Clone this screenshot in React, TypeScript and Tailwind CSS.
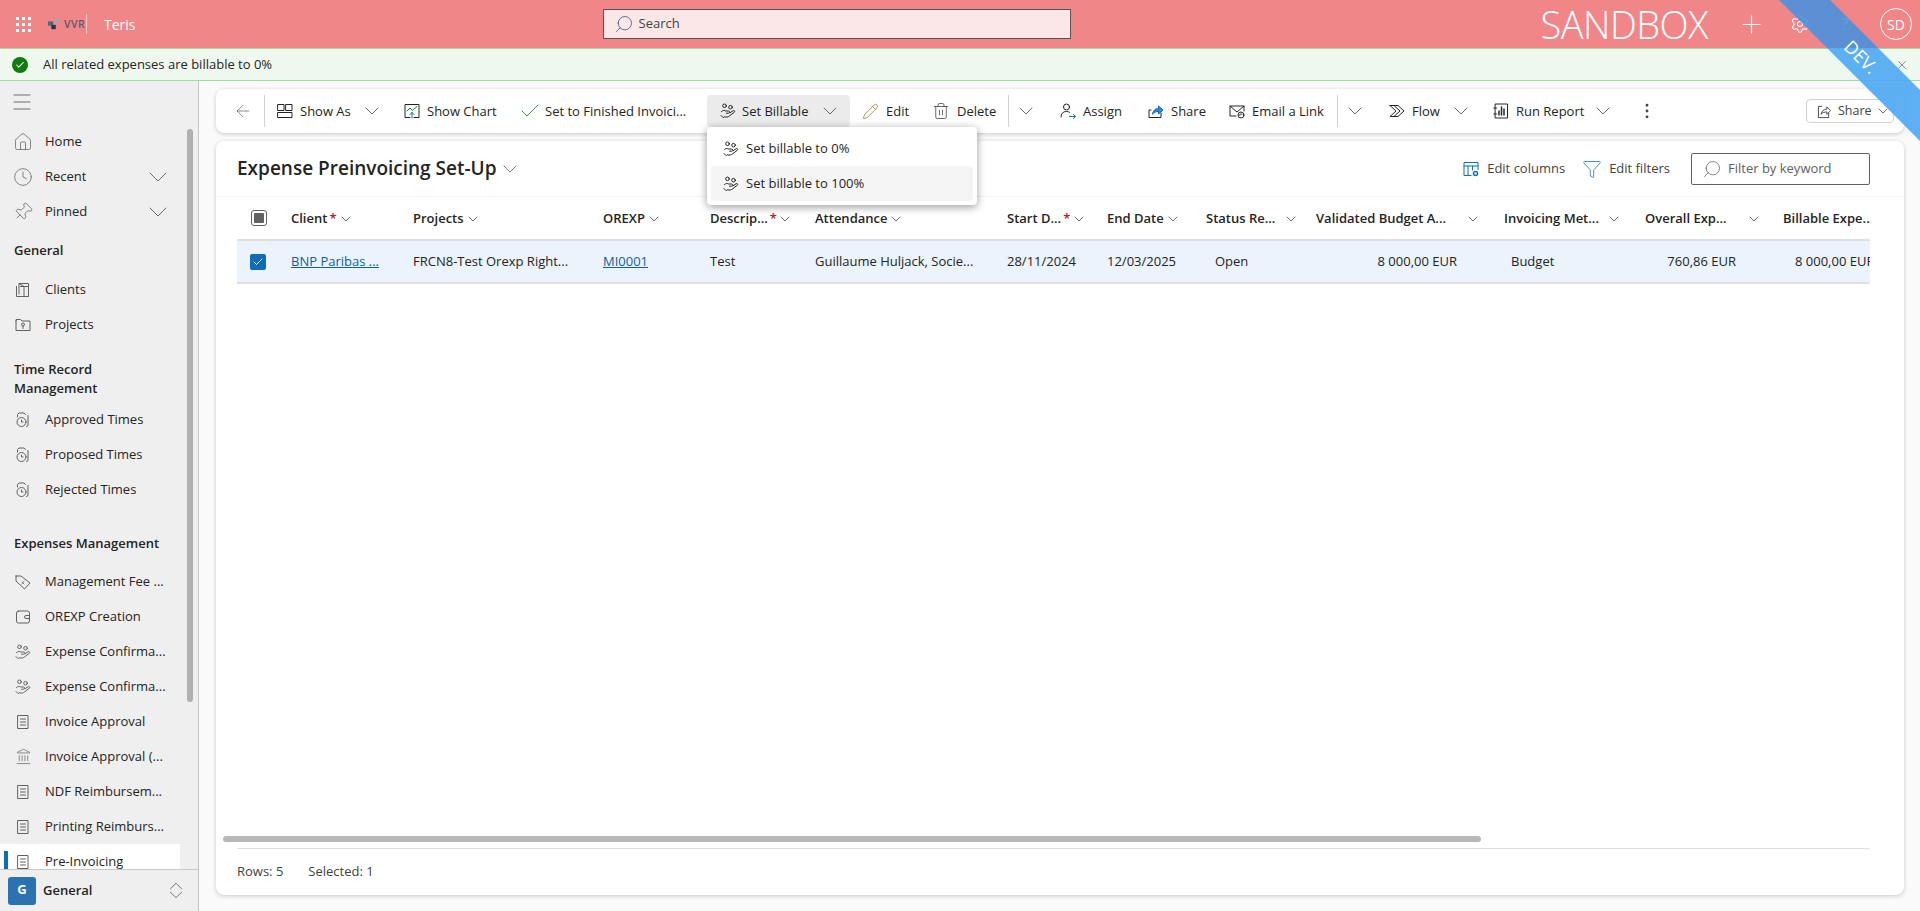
import type { ReactNode } from 'react';
import {
  ArrowLeft,
  Check,
  ChevronDown,
  ChevronUp,
  Clock,
  EllipsisVertical,
  Filter,
  Home,
  Landmark,
  Menu,
  Pencil,
  Pin,
  Plus,
  Search,
  Settings,
  Trash2,
  X,
} from 'lucide-react';

function Svg({ size = 16, children, className }: { size?: number; children: ReactNode; className?: string }) {
  return (
    <svg
      width={size}
      height={size}
      viewBox="0 0 16 16"
      fill="none"
      stroke="currentColor"
      strokeWidth={1}
      strokeLinecap="round"
      strokeLinejoin="round"
      className={`flex-none ${className ?? ''}`}
    >
      {children}
    </svg>
  );
}

const BillableIcon = ({ className }: { className?: string }) => (
  <Svg className={className}>
    <circle cx="4.5" cy="2.8" r="1.8" />
    <circle cx="10.5" cy="4.2" r="1.8" />
    <path d="M1.5 8.5c1.5-1.3 3-1.3 4.2-.5h2.8c1.5 0 1.5 2.2 0 2.2H6.5" />
    <path d="M1 12.5l2.2 2.2 1-.9c2.5.6 4 .2 5.5-1l4.6-3.6c1-1-.2-2.2-1.2-1.5l-3 2" />
  </Svg>
);

const ShowAsIcon = () => (
  <Svg>
    <rect x="1" y="1.5" width="6" height="6" />
    <rect x="9" y="1.5" width="6" height="6" />
    <rect x="1" y="9.5" width="14" height="5" />
  </Svg>
);

const ChartIcon = () => (
  <Svg>
    <path d="M6 14.5H1V1.5h14v13h-5" />
    <path d="M3 8l3-3 2.5 2.5L13 3.5" stroke="#107c10" />
    <path d="M8 15V9.5M6 11.5l2-2 2 2" stroke="#0f6cbd" />
  </Svg>
);

const AssignIcon = () => (
  <Svg>
    <circle cx="6.5" cy="4" r="3" />
    <path d="M1 14c0-3.5 2-5.5 5.5-5.5 1.2 0 2.2.3 3 .8" />
    <path d="M9.5 13.5h6M13.5 11.5l2 2-2 2" stroke="#0f6cbd" />
  </Svg>
);

const ShareIcon = () => (
  <Svg>
    <path d="M3 7H1v7.5h12V10" />
    <path d="M4.5 11c.5-3.5 3-5.5 6-5.5V3l4.5 4-4.5 4V8.5c-2.5 0-4.5.7-6 2.5z" fill="#2b88d8" stroke="#0f6cbd" />
  </Svg>
);

const EmailIcon = () => (
  <Svg>
    <path d="M7 13H1V3h14v5" />
    <path d="M1 3l7 6 7-6" />
    <circle cx="12" cy="12" r="3" />
    <path d="M10.8 12.5a1.2 1.2 0 0 1 2.2-1" />
  </Svg>
);

const FlowIcon = () => (
  <Svg>
    <path d="M1 2.5h8l6 5.5-6 5.5H1L7 8 1 2.5z" />
    <path d="M5 2.5l6 5.5-6 5.5" />
  </Svg>
);

const ReportIcon = () => (
  <Svg>
    <rect x="2.5" y="1" width="12" height="14" />
    <path d="M6 12V8M8.5 12V4M11 12V6" strokeWidth="1.5" />
    <path d="M.8 5h3M.8 11h3" />
  </Svg>
);

const ClientsIcon = () => (
  <Svg>
    <path d="M1.5 4.5v10h12v-10h-8" />
    <path d="M4 12V1.5h9.5v13" />
    <path d="M4 1.5l5 3v10" />
  </Svg>
);

const ProjectIcon = () => (
  <Svg>
    <path d="M1 4V2.5h4.5L7 4h8v9.5H1V4z" />
    <circle cx="8" cy="7.5" r="1.5" />
    <path d="M8 9v2.5" />
  </Svg>
);

const TimeIcon = () => (
  <Svg>
    <path d="M2.5 5V2.5L4 1h5l1.5 1.5M13 3.5v10l-1.5 1" />
    <circle cx="6.5" cy="10" r="4.5" />
    <path d="M6.5 8v2h1.5" />
  </Svg>
);

const TagIcon = () => (
  <Svg>
    <path d="M1 2h5l9 7-5.5 6L1 7V2z" />
    <path d="M7 8l2 2M9 7l-2 3" stroke="#888" />
  </Svg>
);

const WalletIcon = () => (
  <Svg>
    <rect x="1.5" y="2" width="13" height="12" rx="2" />
    <path d="M14.5 6.5H11a1.5 1.5 0 0 0 0 3h3.5" />
  </Svg>
);

const InvoiceIcon = () => (
  <Svg>
    <path d="M3 1.5h10v13H3z" />
    <path d="M5.5 5h5M5.5 8h5M5.5 11h5" />
  </Svg>
);

const BankIcon = () => <Landmark size={17} strokeWidth={1} className="flex-none" />;

const EditColumnsIcon = () => (
  <Svg className="text-[#0f6cbd]">
    <path d="M8 14.5H1v-13h14v7" />
    <path d="M1 5h14M5 5v9.5M9.5 5v4" />
    <circle cx="12.5" cy="12.5" r="2" strokeWidth="1.5" />
  </Svg>
);

const Chevron = ({ className }: { className?: string }) => (
  <ChevronDown size={24} strokeWidth={0.8} className={`flex-none text-[#424242] ${className ?? ''}`} />
);

const SmallChevron = ({ className }: { className?: string }) => (
  <ChevronDown size={16} strokeWidth={1.4} className={`flex-none text-[#616161] ${className ?? ''}`} />
);

function NavRow({ icon, label }: { icon: ReactNode; label: string }) {
  return (
    <div className="flex h-[35px] flex-none items-center pl-[15px] text-[#242424]">
      <span className="w-[30px] flex-none text-[#616161]">{icon}</span>
      <span className="truncate">{label}</span>
    </div>
  );
}

function Sidebar() {
  return (
    <aside className="relative flex w-[199px] flex-none flex-col border-r border-[#c4c4c4] bg-[#efefef]">
      <div className="flex-1 overflow-hidden pr-[18px]">
        <div className="flex h-[42px] items-center pl-[10px] text-[#424242]">
          <Menu size={24} strokeWidth={0.75} />
        </div>
        <div className="h-px" />
        <NavRow icon={<Home size={20} strokeWidth={0.9} className="-ml-[2px]" />} label="Home" />
        <div className="relative">
          <NavRow icon={<Clock size={20} strokeWidth={0.9} className="-ml-[2px]" />} label="Recent" />
          <ChevronDown size={32} strokeWidth={0.7} className="absolute left-[142px] top-[2px] text-[#616161]" />
        </div>
        <div className="relative">
          <NavRow icon={<Pin size={20} strokeWidth={0.9} className="-ml-[2px] rotate-45" />} label="Pinned" />
          <ChevronDown size={32} strokeWidth={0.7} className="absolute left-[142px] top-[2px] text-[#616161]" />
        </div>
        <div className="pl-[14px] pt-[11px] pb-[12px] font-semibold leading-[20px] text-[#242424]">General</div>
        <NavRow icon={<ClientsIcon />} label="Clients" />
        <NavRow icon={<ProjectIcon />} label="Projects" />
        <div className="pl-[14px] pt-[18px] pb-[4px] font-semibold leading-[19px] text-[#242424]">
          Time Record
          <br />
          Management
        </div>
        <NavRow icon={<TimeIcon />} label="Approved Times" />
        <NavRow icon={<TimeIcon />} label="Proposed Times" />
        <NavRow icon={<TimeIcon />} label="Rejected Times" />
        <div className="pl-[14px] pt-[26px] pb-[11px] font-semibold leading-[20px] whitespace-nowrap text-[#242424]">
          Expenses Management
        </div>
        <NavRow icon={<TagIcon />} label="Management Fee ..." />
        <NavRow icon={<WalletIcon />} label="OREXP Creation" />
        <NavRow icon={<BillableIcon />} label="Expense Confirma..." />
        <NavRow icon={<BillableIcon />} label="Expense Confirma..." />
        <NavRow icon={<InvoiceIcon />} label="Invoice Approval" />
        <NavRow icon={<BankIcon />} label="Invoice Approval (..." />
        <NavRow icon={<InvoiceIcon />} label="NDF Reimbursem..." />
        <NavRow icon={<InvoiceIcon />} label="Printing Reimburs..." />
        <div className="relative bg-white">
          <div className="absolute bottom-[9px] left-[4px] top-[7px] w-[4px] bg-[#0f6cbd]" />
          <NavRow icon={<InvoiceIcon />} label="Pre-Invoicing" />
        </div>
      </div>
      <div className="absolute left-[187px] top-[48px] h-[573px] w-[6px] rounded-full bg-[#b0b0b0]" />
      <div className="flex h-[42px] flex-none items-center border-t border-[#c8c8c8] bg-[#efefef] pl-[8px] pr-[11px]">
        <span className="flex h-[28px] w-[28px] items-start justify-center rounded-[3px] bg-[#2b72b0] pt-[3px] text-[13px] font-bold text-white">
          G
        </span>
        <span className="ml-[7px] font-semibold text-[#242424]">General</span>
        <span className="ml-auto flex flex-col items-center text-[#424242]">
          <ChevronUp size={22} strokeWidth={0.8} />
          <ChevronDown size={22} strokeWidth={0.8} className="-mt-[13px]" />
        </span>
      </div>
    </aside>
  );
}

function ToolItem({
  width,
  icon,
  label,
  chevron,
}: {
  width: string;
  icon: ReactNode;
  label: string;
  chevron?: boolean;
}) {
  return (
    <div className={`flex h-[32px] flex-none items-center pl-[12px] text-[#242424] ${width}`}>
      <span className="mr-[7px] flex-none text-[#242424]">{icon}</span>
      <span className="mt-[2px] whitespace-nowrap">{label}</span>
      {chevron && <Chevron className="ml-auto mr-[8px]" />}
    </div>
  );
}

function Divider() {
  return <div className="h-[32px] w-px flex-none bg-[#d1d1d1]" />;
}

function CommandBar() {
  return (
    <div className="flex h-[44px] flex-none items-center rounded-[8px] bg-white shadow-[0_1px_4px_rgba(0,0,0,0.2)]">
      <div className="flex w-[48px] flex-none justify-center pl-[6px] text-[#616161]">
        <ArrowLeft size={20} strokeWidth={0.9} />
      </div>
      <Divider />
      <ToolItem width="w-[127px]" icon={<ShowAsIcon />} label="Show As" chevron />
      <ToolItem width="w-[118px]" icon={<ChartIcon />} label="Show Chart" />
      <ToolItem
        width="w-[197px]"
        icon={<Check size={24} strokeWidth={0.8} className="-mx-[4px] text-[#107c10]" />}
        label="Set to Finished Invoici..."
      />
      <div className="relative flex-none">
        <div className="flex h-[32px] w-[143px] items-center rounded-[4px] bg-[#ebebeb] pl-[13px] text-[#242424]">
          <BillableIcon className="mr-[6px]" />
          <span className="mt-[2px] whitespace-nowrap">Set Billable</span>
          <Chevron className="ml-auto mr-[8px]" />
        </div>
        <div className="absolute left-0 top-[32px] z-10 flex h-[78px] w-[270px] flex-col rounded-[4px] bg-white px-[4px] pt-[4px] shadow-[0_2px_8px_rgba(0,0,0,0.4)]">
          <div className="flex h-[35px] items-center pl-[12px] text-[#242424]">
            <BillableIcon className="mr-[7px]" />
            Set billable to 0%
          </div>
          <div className="flex h-[35px] items-center rounded-[4px] bg-[#f5f5f5] pl-[12px] text-[#242424]">
            <BillableIcon className="mr-[7px]" />
            Set billable to 100%
          </div>
        </div>
      </div>
      <ToolItem width="w-[71px]" icon={<Pencil size={17} strokeWidth={1} className="text-[#8a6d1c]" />} label="Edit" />
      <ToolItem width="w-[87px]" icon={<Trash2 size={18} strokeWidth={0.9} className="-ml-[1px]" />} label="Delete" />
      <Divider />
      <div className="flex w-[39px] flex-none pl-[5px]">
        <Chevron />
      </div>
      <ToolItem width="w-[88px]" icon={<AssignIcon />} label="Assign" />
      <ToolItem width="w-[81px]" icon={<ShareIcon />} label="Share" />
      <ToolItem width="w-[120px]" icon={<EmailIcon />} label="Email a Link" />
      <Divider />
      <div className="flex w-[39px] flex-none pl-[5px]">
        <Chevron />
      </div>
      <ToolItem width="w-[104px]" icon={<FlowIcon />} label="Flow" chevron />
      <ToolItem width="w-[142px]" icon={<ReportIcon />} label="Run Report" chevron />
      <div className="flex w-[48px] flex-none justify-center text-[#424242]">
        <EllipsisVertical size={20} strokeWidth={1.5} />
      </div>
      <div className="ml-auto mr-[10px] flex h-[24px] w-[88px] flex-none items-center rounded-[4px] border border-[#d1d1d1] pl-[10px] text-[12.5px] text-[#424242]">
        <ShareIcon2 />
        <span className="ml-[6px]">Share</span>
        <SmallChevron className="ml-[3px]" />
      </div>
    </div>
  );
}

function ShareIcon2() {
  return (
    <Svg size={15}>
      <path d="M5 2.5H1.5v12h11V10" />
      <path d="M4.5 10.5c.5-3 2.7-5 6-5V3l4 4-4 4V8.5c-2.5 0-4.5.5-6 2z" />
    </Svg>
  );
}

function HeadCell({ label, required, chevronClass }: { label: string; required?: boolean; chevronClass?: string }) {
  return (
    <div className="flex items-center whitespace-nowrap pt-[2px] font-semibold text-[#242424]">
      {label}
      {required && <span className="ml-[2px] text-[#a4262c]">*</span>}
      <SmallChevron className={chevronClass ?? 'ml-[1px]'} />
    </div>
  );
}

function Table() {
  return (
    <div className="ml-[21px] mr-[34px] overflow-hidden">
      <div className="w-[1700px]">
        <div className="grid h-[44px] grid-cols-[54px_122px_190px_107px_105px_192px_100px_99px_110px_188px_141px_138px_87px] border-b-2 border-[#e0e0e0]">
          <div className="flex items-center pl-[14px]">
            <span className="flex h-[16px] w-[16px] items-center justify-center rounded-[3px] border border-[#616161]">
              <span className="h-[10px] w-[10px] rounded-[1px] bg-[#616161]" />
            </span>
          </div>
          <HeadCell label="Client" required />
          <HeadCell label="Projects" />
          <HeadCell label="OREXP" />
          <HeadCell label="Descrip..." required chevronClass="ml-[0px]" />
          <HeadCell label="Attendance" />
          <HeadCell label="Start D..." required />
          <HeadCell label="End Date" />
          <HeadCell label="Status Re..." chevronClass="ml-[8px]" />
          <HeadCell label="Validated Budget A..." chevronClass="ml-[19px]" />
          <HeadCell label="Invoicing Met..." chevronClass="ml-[7px]" />
          <HeadCell label="Overall Exp..." chevronClass="ml-[19px]" />
          <HeadCell label="Billable Expe..." />
        </div>
        <div className="grid h-[43px] grid-cols-[54px_122px_190px_107px_105px_192px_100px_99px_110px_188px_141px_138px_87px] items-center border-b-2 border-[#e0e0e0] bg-[#ebf3fc] whitespace-nowrap text-[#242424]">
          <div className="flex items-center pl-[13px]">
            <span className="flex h-[16px] w-[16px] items-center justify-center rounded-[2px] bg-[#0f6cbd] text-white">
              <Check size={12} strokeWidth={2} />
            </span>
          </div>
          <div className="text-[#115ea3] underline">BNP Paribas ...</div>
          <div>FRCN8-Test Orexp Right...</div>
          <div className="text-[#115ea3] underline">MI0001</div>
          <div>Test</div>
          <div>Guillaume Huljack, Socie...</div>
          <div>28/11/2024</div>
          <div>12/03/2025</div>
          <div className="pl-[9px]">Open</div>
          <div className="pr-[47px] text-right">8 000,00 EUR</div>
          <div className="pl-[7px]">Budget</div>
          <div className="pr-[47px] text-right">760,86 EUR</div>
          <div className="pl-[12px]">8 000,00 EUR</div>
        </div>
      </div>
    </div>
  );
}

function Card() {
  return (
    <div className="flex flex-1 flex-col rounded-[8px] bg-white shadow-[0_1px_4px_rgba(0,0,0,0.2)]">
      <div className="flex h-[56px] flex-none items-center border-b border-[#f5f5f5] pl-[21px] pr-[34px]">
        <span className="text-[19px] font-semibold text-[#242424]">Expense Preinvoicing Set-Up</span>
        <Chevron className="ml-[1px] text-[#616161]" />
        <div className="ml-auto flex items-center text-[#424242]">
          <span className="mr-[8px]">
            <EditColumnsIcon />
          </span>
          <span>Edit columns</span>
          <Filter size={20} strokeWidth={0.9} className="ml-[17px] mr-[7px] text-[#0f6cbd]" />
          <span>Edit filters</span>
          <div className="ml-[21px] flex h-[32px] w-[179px] items-center rounded-[2px] border border-[#616161] pl-[10px] text-[#616161]">
            <Search size={20} strokeWidth={0.9} className="-scale-x-100" />
            <span className="ml-[6px]">Filter by keyword</span>
          </div>
        </div>
      </div>
      <Table />
      <div className="mt-auto ml-[7px] h-[6px] w-[1258px] flex-none rounded-full bg-[#b8b8b8]" />
      <div className="ml-[21px] mr-[34px] mt-[6px] flex h-[47px] flex-none items-center gap-[25px] border-t border-[#e0e0e0] text-[#424242]">
        <span>Rows: 5</span>
        <span>Selected: 1</span>
      </div>
    </div>
  );
}

function TopBar() {
  return (
    <header className="flex h-[48px] flex-none items-center bg-[#f18689] pl-[16px] text-white">
      <div className="grid w-[15px] grid-cols-3 gap-[3px]">
        {[0, 1, 2, 3, 4, 5, 6, 7, 8].map((i) => (
          <span key={i} className="h-[3px] w-[3px] bg-white" />
        ))}
      </div>
      <svg width="12" height="12" viewBox="0 0 14 12" className="ml-[17px] flex-none">
        <rect x="0" y="3" width="6" height="5" fill="#4a6a82" />
        <rect x="4" y="7" width="5" height="5" fill="#26323f" />
        <rect x="8" y="0" width="5" height="5" fill="#a9a9a9" />
      </svg>
      <span className="ml-[4px] w-[23px] overflow-hidden border-r border-[#f9c6c6] text-[10.5px] font-semibold leading-[20px] tracking-[0.5px] text-[#5d5a6e]">
        VVR
      </span>
      <span className="ml-[17px] text-[14px]">Teris</span>
      <div className="ml-[467px] flex h-[30px] w-[468px] flex-none items-center border border-[#555] bg-[#fbe7e7] pl-[10px] text-[#424242]">
        <Search size={20} strokeWidth={0.9} className="-scale-x-100 text-[#2a4a80]" />
        <span className="ml-[5px]">Search</span>
      </div>
      <span className="ml-auto text-[38px] font-light leading-[46px] tracking-[-0.5px]">SANDBOX</span>
      <Plus size={29} strokeWidth={1} className="ml-[29px]" />
      <Settings size={20} strokeWidth={1.3} className="ml-[24px]" />
      <span className="ml-[31px] w-[12px] text-[18px]">?</span>
      <span className="ml-[27px] mr-[8px] flex h-[32px] w-[32px] items-center justify-center rounded-full border border-white text-[14px]">
        SD
      </span>
    </header>
  );
}

function Ribbon() {
  return (
    <div className="pointer-events-none absolute right-0 top-0 z-20 h-[141px] w-[141px]">
      <svg width="141" height="141" viewBox="0 0 141 141">
        <polygon points="0,0 51,0 99,48 48,48" fill="#4a91de" fillOpacity="0.9" />
        <polygon points="48,48 99,48 141,90 141,141" fill="#4da7f4" fillOpacity="0.9" />
      </svg>
      <div className="absolute left-[82px] top-[57px] -translate-x-1/2 -translate-y-1/2 rotate-45 text-[18px] text-white">
        DEV.
      </div>
    </div>
  );
}

export default function App() {
  return (
    <div className="relative flex h-screen w-full flex-col overflow-hidden bg-[#fafafa] font-['Open_Sans',sans-serif] text-[13px]">
      <TopBar />
      <div className="flex h-[33px] flex-none items-center border-y border-[#a0dca0] bg-[#eff8ef] pl-[12px] pr-[11px] text-[#242424]">
        <span className="flex h-[16px] w-[16px] items-center justify-center rounded-full bg-[#107c10] text-white">
          <Check size={10} strokeWidth={2.5} />
        </span>
        <span className="ml-[15px]">All related expenses are billable to 0%</span>
        <X size={14} strokeWidth={1} className="ml-auto text-[#424242]" />
      </div>
      <div className="flex min-h-0 flex-1">
        <Sidebar />
        <main className="flex min-w-0 flex-1 flex-col gap-[8px] pb-[16px] pl-[17px] pr-[16px] pt-[8px]">
          <CommandBar />
          <Card />
        </main>
      </div>
      <Ribbon />
    </div>
  );
}
